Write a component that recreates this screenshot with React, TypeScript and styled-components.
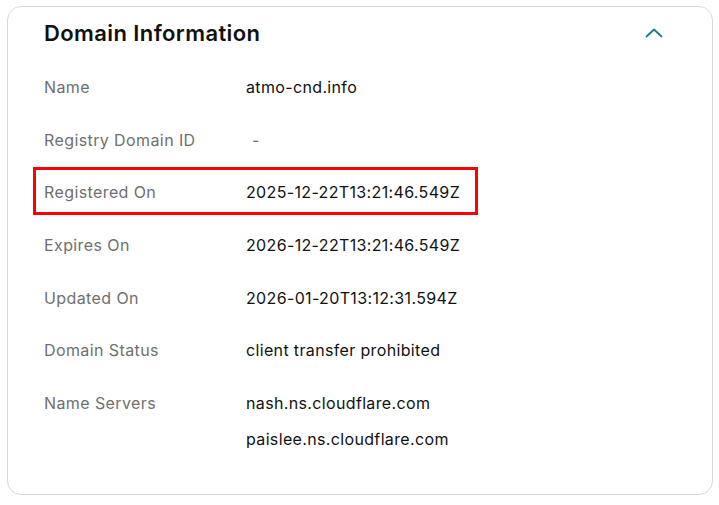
import React from "react";
import styled, { createGlobalStyle } from "styled-components";

const Global = createGlobalStyle`
  html, body { margin: 0; padding: 0; background: #ffffff; }
  body { font-family: Inter, "Noto Sans", "Liberation Sans", sans-serif; }
  * { box-sizing: border-box; }
`;

const Card = styled.section`
  margin: 6px 6px 0 7px;
  width: 706px;
  height: 489px;
  border: 1px solid #d4d9de;
  border-radius: 14px;
  padding: 0 0 0 36px;
  background: #fff;
`;

const Header = styled.div`
  display: flex;
  align-items: center;
  justify-content: space-between;
  height: 52px;
  padding-right: 46px;
`;

const Title = styled.h2`
  margin: 0;
  font-size: 22px;
  font-weight: 600;
  color: #111111;
  letter-spacing: 0.4px;
`;

const ToggleButton = styled.button`
  display: flex;
  align-items: center;
  justify-content: center;
  width: 24px;
  height: 24px;
  padding: 0;
  border: none;
  background: transparent;
  color: #1b7c86;
`;

const Rows = styled.div`
  display: flex;
  flex-direction: column;
  padding-top: 2px;
`;

const Row = styled.div`
  position: relative;
  display: grid;
  grid-template-columns: 202px 1fr;
  padding: 16px 0;
  line-height: 20.67px;
  font-size: 16px;
`;

const Label = styled.div`
  color: #6f6f6f;
  letter-spacing: 0.4px;
`;

const Values = styled.div`
  display: flex;
  flex-direction: column;
  gap: 15.33px;
  color: #111111;
  letter-spacing: 0.35px;
`;

const Dash = styled.span`
  padding-left: 6px;
  color: #707070;
`;

const Highlight = styled.div`
  position: absolute;
  left: -11px;
  top: 1px;
  width: 445px;
  height: 48px;
  border: 3px solid #ff0000;
  pointer-events: none;
`;

type Item = { label: string; values: string[]; highlight?: boolean; empty?: boolean };

const items: Item[] = [
  { label: "Name", values: ["atmo-cnd.info"] },
  { label: "Registry Domain ID", values: ["-"], empty: true },
  { label: "Registered On", values: ["2025-12-22T13:21:46.549Z"], highlight: true },
  { label: "Expires On", values: ["2026-12-22T13:21:46.549Z"] },
  { label: "Updated On", values: ["2026-01-20T13:12:31.594Z"] },
  { label: "Domain Status", values: ["client transfer prohibited"] },
  { label: "Name Servers", values: ["nash.ns.cloudflare.com", "paislee.ns.cloudflare.com"] },
];

export default function App() {
  return (
    <>
      <Global />
      <Card>
        <Header>
          <Title>Domain Information</Title>
          <ToggleButton aria-label="Collapse">
            <svg width="18" height="10" viewBox="0 0 18 10" fill="none">
              <polyline points="1.5,8.5 9,1.5 16.5,8.5" stroke="currentColor" strokeWidth="1.8" strokeLinecap="round" strokeLinejoin="round" />
            </svg>
          </ToggleButton>
        </Header>
        <Rows>
          {items.map((it) => (
            <Row key={it.label}>
              {it.highlight && <Highlight />}
              <Label>{it.label}</Label>
              <Values>
                {it.values.map((v) =>
                  it.empty ? <Dash key={v}>{v}</Dash> : <span key={v}>{v}</span>
                )}
              </Values>
            </Row>
          ))}
        </Rows>
      </Card>
    </>
  );
}
